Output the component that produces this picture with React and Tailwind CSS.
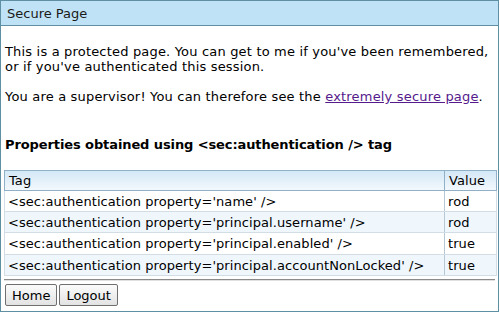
export default function App() {
  const rows = [
    ["<sec:authentication property='name' />", "rod", "bg-white h-[21px]"],
    ["<sec:authentication property='principal.username' />", "rod", "bg-[#eff7fd] h-[21px]"],
    ["<sec:authentication property='principal.enabled' />", "true", "bg-white h-[22px]"],
    ["<sec:authentication property='principal.accountNonLocked' />", "true", "bg-[#eff7fd] h-[21px]"],
  ];
  return (
    <div className="w-[500px] h-[312px] bg-white text-black font-['DejaVu_Sans',sans-serif] text-[13px] leading-[15px] overflow-hidden">
      <div className="w-[499px] h-[312px] border border-[#5f8fa3] flex flex-col">
        <div className="h-[25px] shrink-0 bg-[#bfe2f6] border-b border-[#5f8fa3] pl-[6px] flex items-center text-[13px] text-[#1a1a1a]">
          Secure Page
        </div>
        <div className="px-[3px] flex flex-col">
          <p className="mt-[18px] pl-[1px] tracking-[0.18px]">
            This is a protected page. You can get to me if you've been remembered,
            <br />
            or if you've authenticated this session.
          </p>
          <p className="mt-[15px] pl-[1px] tracking-[0.18px]">
            You are a supervisor! You can therefore see the{" "}
            <a href="#" className="text-[#551a8b] underline">extremely secure page</a>.
          </p>
          <h3 className="mt-[33px] pl-[1px] font-bold text-[13px] tracking-[-0.1px]">
            Properties obtained using &lt;sec:authentication /&gt; tag
          </h3>
          <table className="mt-[18px] w-[493px] border-collapse border border-[#8fb0c6] tracking-[0.07px]">
            <thead>
              <tr className="bg-gradient-to-b from-[#d4e8f6] to-[#f4f9fd] h-[20px]">
                <th className="text-left font-normal border border-[#8fb0c6] px-[4px] py-0">Tag</th>
                <th className="text-left font-normal border border-[#8fb0c6] px-[4px] py-0 w-[52px]">Value</th>
              </tr>
            </thead>
            <tbody>
              {rows.map((r, i) => (
                <tr key={i} className={r[2]}>
                  <td className="border border-[#d3dde5] border-r-[#b7c8d4] px-[3px] py-0">{r[0]}</td>
                  <td className="border border-[#d3dde5] px-[3px] py-0">{r[1]}</td>
                </tr>
              ))}
            </tbody>
          </table>
          <div className="mt-[3px] h-[2px] w-[491px] border-t border-[#8a8a8a] border-b border-b-[#e0e0e0]" />
          <div className="mt-[3px] flex gap-[2px] ml-[1px]">
            <button className="h-[22px] px-[6px] border border-[#6f6f6f] rounded-[2px] bg-gradient-to-b from-[#fbfbfb] to-[#e3e3e3] text-[13px] text-black">Home</button>
            <button className="h-[22px] px-[6px] border border-[#6f6f6f] rounded-[2px] bg-gradient-to-b from-[#fbfbfb] to-[#e3e3e3] text-[13px] text-black">Logout</button>
          </div>
        </div>
      </div>
    </div>
  );
}
